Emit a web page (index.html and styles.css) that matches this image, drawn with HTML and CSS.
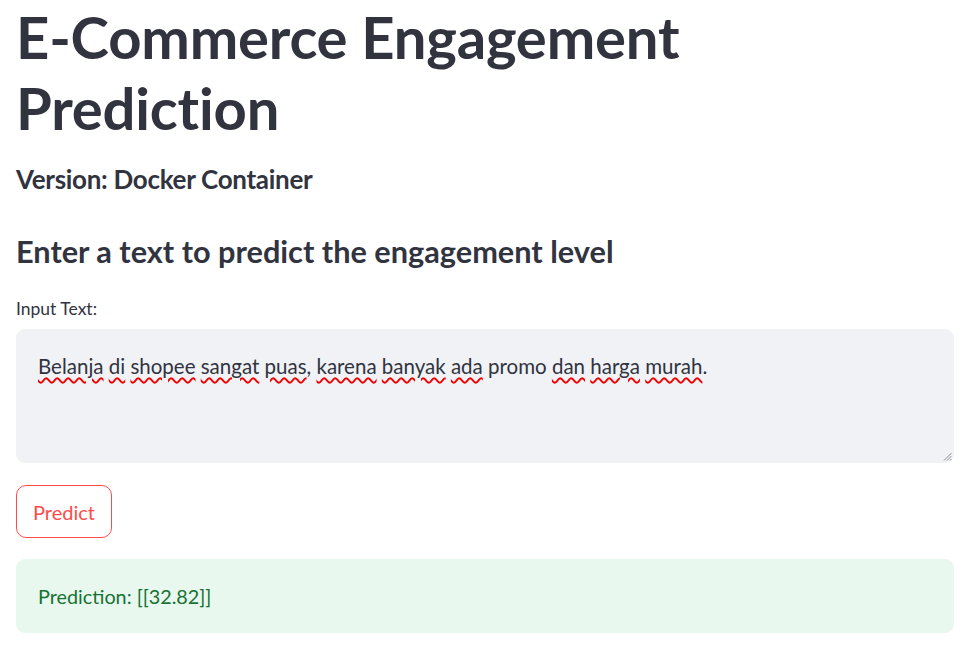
FILE: index.html
```html
<!DOCTYPE html>
<html lang="en">
<head>
<meta charset="utf-8">
<title>E-Commerce Engagement Prediction</title>
<link rel="stylesheet" href="styles.css">
</head>
<body>
<main class="app">
  <h1 class="title">E-Commerce Engagement<br>Prediction</h1>
  <h4 class="version">Version: Docker Container</h4>
  <h3 class="subtitle">Enter a text to predict the engagement level</h3>
  <div class="field">
    <label class="label">Input Text:</label>
    <div class="textarea">
      <p class="text"><span class="sp">Belanja</span> <span class="sp">di</span> <span class="sp">shopee</span> <span class="sp">sangat</span> <span class="sp">puas</span>, <span class="sp">karena</span> <span class="sp">banyak</span> <span class="sp">ada</span> promo <span class="sp">dan</span> <span class="sp">harga</span> <span class="sp">murah</span>.</p>
      <svg class="grip" width="9" height="9" viewBox="0 0 9 9"><path d="M8.5 1 L1 8.5 M8.5 4 L4 8.5 M8.5 7 L7 8.5" stroke="#8a8d93" stroke-width="1"/></svg>
    </div>
  </div>
  <button class="btn">Predict</button>
  <div class="alert">Prediction: [[32.82]]</div>
</main>
</body>
</html>
```

FILE: styles.css
```css
* { box-sizing: border-box; }
html, body { margin: 0; padding: 0; background: #fff; }
body {
  font-family: "Lato", "Noto Sans", sans-serif;
  color: #31333f;
}
.app {
  padding: 0 16px;
  display: flex;
  flex-direction: column;
}
.title {
  margin: 0;
  font-size: 58px;
  line-height: 71px;
  font-weight: 700;
  letter-spacing: -0.2px;
  padding-top: 1px;
}
.version {
  margin: 19px 0 0 0;
  font-size: 26px;
  line-height: 34px;
  font-weight: 700;
  letter-spacing: -0.3px;
}
.subtitle {
  margin: 36px 0 0 0;
  font-size: 30.7px;
  line-height: 40px;
  font-weight: 700;
  letter-spacing: 0;
}
.field {
  margin-top: 26px;
  display: flex;
  flex-direction: column;
}
.label {
  font-size: 17.5px;
  line-height: 22px;
  margin-bottom: 9px;
}
.textarea {
  position: relative;
  height: 134px;
  background: #f0f2f6;
  border-radius: 9px;
  padding: 23px 22px 20px;
}
.text {
  margin: 0;
  font-size: 20.5px;
  line-height: 28px;
}
.sp {
  text-decoration: underline wavy #f00000;
  text-decoration-thickness: 1.5px;
  text-underline-offset: 3px;
}
.grip {
  position: absolute;
  right: 2px;
  bottom: 2px;
}
.btn {
  align-self: flex-start;
  margin-top: 22px;
  height: 53px;
  padding: 0 16px;
  font-family: inherit;
  font-size: 20px;
  color: #ff4b4b;
  background: #fff;
  border: 1px solid #ff4b4b;
  border-radius: 10px;
}
.alert {
  margin-top: 21px;
  height: 74px;
  background: #e8f8ee;
  color: #177233;
  border-radius: 9px;
  padding: 0 22px;
  display: flex;
  align-items: center;
  font-size: 19.8px;
}
```
